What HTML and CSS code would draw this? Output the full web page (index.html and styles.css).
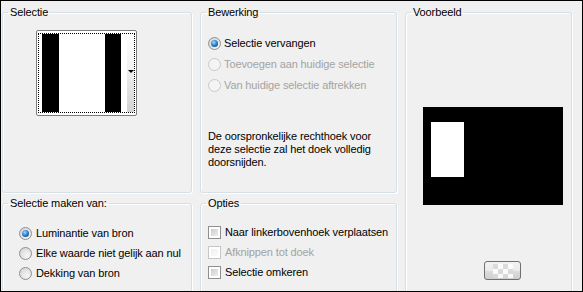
FILE: index.html
```html
<!DOCTYPE html>
<html>
<head>
<meta charset="utf-8">
<link rel="stylesheet" href="styles.css">
</head>
<body>
<div class="dialog">
  <fieldset class="group g-sel">
    <legend>Selectie</legend>
    <div class="thumb">
      <div class="thumb-img">
        <span class="st w3"></span>
        <span class="st b17"></span>
        <span class="st w46"></span>
        <span class="st b16"></span>
        <span class="st w6"></span>
        <span class="st drop"><i class="arrow"></i></span>
      </div>
    </div>
  </fieldset>

  <fieldset class="group g-bew">
    <legend>Bewerking</legend>
    <div class="opts r21">
      <div class="opt"><span class="radio on"></span><span>Selectie vervangen</span></div>
      <div class="opt dis"><span class="radio"></span><span>Toevoegen aan huidige selectie</span></div>
      <div class="opt dis"><span class="radio"></span><span>Van huidige selectie aftrekken</span></div>
    </div>
    <p class="desc">De oorspronkelijke rechthoek voor<br>deze selectie zal het doek volledig<br>doorsnijden.</p>
  </fieldset>

  <fieldset class="group g-voor">
    <legend>Voorbeeld</legend>
    <div class="preview"><div class="preview-sel"></div></div>
    <button class="chk-btn" type="button"><span class="checker"></span></button>
  </fieldset>

  <fieldset class="group g-maken">
    <legend>Selectie maken van:</legend>
    <div class="opts r20">
      <div class="opt"><span class="radio on"></span><span>Luminantie van bron</span></div>
      <div class="opt"><span class="radio"></span><span>Elke waarde niet gelijk aan nul</span></div>
      <div class="opt"><span class="radio"></span><span>Dekking van bron</span></div>
    </div>
  </fieldset>

  <fieldset class="group g-opt">
    <legend>Opties</legend>
    <div class="opts r20">
      <div class="opt"><span class="check"></span><span>Naar linkerbovenhoek verplaatsen</span></div>
      <div class="opt dis"><span class="check"></span><span>Afknippen tot doek</span></div>
      <div class="opt"><span class="check"></span><span>Selectie omkeren</span></div>
    </div>
  </fieldset>
</div>
</body>
</html>
```
FILE: styles.css
```css
html, body {
  margin: 0;
  padding: 0;
  background: #f0f0f0;
}
.dialog {
  width: 583px;
  height: 292px;
  box-sizing: border-box;
  border: 1px solid #000;
  background: #f0f0f0;
  overflow: hidden;
  display: grid;
  grid-template-columns: 190px 197px 167px;
  grid-template-rows: 187px 100px;
  column-gap: 8px;
  row-gap: 4px;
  padding: 5px 0 0 1px;
  font-family: "Liberation Sans", Arial, sans-serif;
  font-size: 11px;
  line-height: 13px;
  letter-spacing: -0.12px;
  color: #000;
}
.group {
  margin: 0;
  padding: 0;
  min-width: 0;
  border: 1px solid #d5dfe5;
  border-radius: 3px;
  box-shadow: inset 1px 1px 0 #fff, 1px 1px 0 #fff;
}
.group legend {
  margin-left: 5px;
  padding: 0 2px;
  line-height: 13px;
  height: 13px;
}
.g-voor {
  grid-column: 3;
  grid-row: 1 / 3;
}
.g-maken { grid-column: 1; grid-row: 2; }
.g-opt { grid-column: 2; grid-row: 2; }

/* Selectie thumbnail */
.thumb {
  margin: 11px 0 0 33px;
  width: 101px;
  height: 86px;
  box-sizing: border-box;
  border: 1px solid #7c7c7c;
  border-radius: 2px;
  background: #fff;
  padding: 2px 1px;
}
.thumb-img {
  height: 100%;
  box-sizing: border-box;
  border: 1px dotted #000;
  display: flex;
}
.st { display: block; height: 100%; }
.w3 { width: 3px; background: #fff; }
.b17 { width: 17px; background: #000; }
.w46 { width: 46px; background: #fff; }
.b16 { width: 16px; background: #000; }
.w6 { width: 6px; background: #fff; }
.drop {
  width: 7px;
  background: linear-gradient(#fdfdfd, #f2f2f2 40%, #d2d2d2);
  display: flex;
  justify-content: center;
  padding-top: 36px;
  box-sizing: border-box;
}
.arrow {
  display: block;
  width: 0;
  height: 0;
  border-left: 3px solid transparent;
  border-right: 3px solid transparent;
  border-top: 3px solid #000;
}

/* options */
.opts { display: flex; flex-direction: column; }
.opt { display: flex; align-items: center; white-space: nowrap; }
.r21 .opt { height: 21px; }
.r20 .opt { height: 20px; }
.g-bew .opts { margin-top: 14px; padding-left: 7px; }
.g-bew .opt .radio { margin-right: 3px; }
.g-maken .opts { margin-top: 13px; padding-left: 16px; }
.g-maken .opt .radio { margin-right: 4px; }
.g-opt .opts { margin-top: 12px; padding-left: 7px; }
.g-opt .opt .check { margin-right: 4px; }
.opt.dis { color: #a3a3a3; }

.radio {
  flex: none;
  position: relative;
  width: 13px;
  height: 13px;
  box-sizing: border-box;
  border-radius: 50%;
  border: 1px solid #8d8e8e;
  background: radial-gradient(circle at 65% 70%, #f6f6f6 0, #e6e6e6 45%, #cfcfcf 100%);
}
.radio.on::after {
  content: "";
  position: absolute;
  left: 2px;
  top: 2px;
  width: 7px;
  height: 7px;
  border-radius: 50%;
  background: radial-gradient(circle at 40% 35%, #a4dcff 0, #3b8fd9 40%, #14528f 75%, #0c3a6a 100%);
}
.dis .radio {
  border-color: #c9c9c9;
  background: #f4f4f4;
}

.check {
  flex: none;
  width: 13px;
  height: 13px;
  box-sizing: border-box;
  border: 1px solid #8d8e8e;
  background: #fff;
  padding: 2px;
}
.check::before {
  content: "";
  display: block;
  width: 100%;
  height: 100%;
  background: linear-gradient(135deg, #cbcbcb, #efefef);
}
.dis .check { border-color: #c6c6c6; }
.dis .check::before { background: linear-gradient(135deg, #f0f0f0, #fafafa); }

.desc {
  margin: 34px 0 0;
  padding-left: 7px;
}

/* Voorbeeld */
.preview {
  margin: 88px 0 0 17px;
  width: 140px;
  height: 98px;
  background: #000;
  padding: 15px 0 0 8px;
  box-sizing: border-box;
}
.preview-sel {
  width: 33px;
  height: 55px;
  background: #fff;
}
.chk-btn {
  display: flex;
  align-items: center;
  justify-content: center;
  margin: 56px 0 0 78px;
  width: 37px;
  height: 19px;
  padding: 0;
  box-sizing: border-box;
  border: 1px solid #707070;
  border-radius: 3px;
  background: linear-gradient(#f2f2f2, #ebebeb 50%, #dddddd 51%, #cfcfcf);
}
.checker {
  display: block;
  width: 20px;
  height: 14px;
  background: repeating-conic-gradient(#fdfdfd 0 25%, #d9d9d9 0 50%) 0 0 / 10px 10px;
  opacity: 0.9;
}
```
